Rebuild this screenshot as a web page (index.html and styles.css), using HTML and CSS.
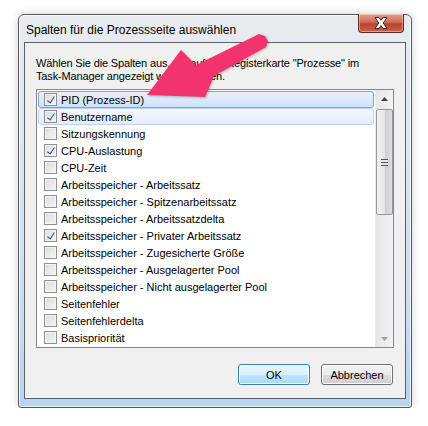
FILE: index.html
```html
<!DOCTYPE html>
<html lang="de">
<head>
    <meta charset="UTF-8">
    <title>Spalten auswählen</title>
    <link rel="stylesheet" href="styles.css">
</head>
<body>

<div class="window">
    <div class="titlebar">
        <span class="title">Spalten für die Prozessseite auswählen</span>
        <button class="close" aria-label="Schließen">
            <svg width="20" height="14" viewBox="0 0 20 14">
                <path d="M4 1.5 L8 1.5 L10 4.3 L12 1.5 L16 1.5 L12.2 7 L16 12.5 L12 12.5 L10 9.7 L8 12.5 L4 12.5 L7.8 7 Z" fill="#fff" stroke="#3b2420" stroke-width="1"/>
            </svg>
        </button>
    </div>

    <div class="client">
        <p class="intro">Wählen Sie die Spalten aus, die auf der Registerkarte "Prozesse" im<br>Task-Manager angezeigt werden sollen.</p>

        <div class="listbox">
            <ul class="items">
                <li class="item selected focused"><span class="check on"></span>PID (Prozess-ID)</li>
                <li class="item selected"><span class="check on"></span>Benutzername</li>
                <li class="item"><span class="check"></span>Sitzungskennung</li>
                <li class="item"><span class="check on"></span>CPU-Auslastung</li>
                <li class="item"><span class="check"></span>CPU-Zeit</li>
                <li class="item"><span class="check"></span>Arbeitsspeicher - Arbeitssatz</li>
                <li class="item"><span class="check"></span>Arbeitsspeicher - Spitzenarbeitssatz</li>
                <li class="item"><span class="check"></span>Arbeitsspeicher - Arbeitssatzdelta</li>
                <li class="item"><span class="check on"></span>Arbeitsspeicher - Privater Arbeitssatz</li>
                <li class="item"><span class="check"></span>Arbeitsspeicher - Zugesicherte Größe</li>
                <li class="item"><span class="check"></span>Arbeitsspeicher - Ausgelagerter Pool</li>
                <li class="item"><span class="check"></span>Arbeitsspeicher - Nicht ausgelagerter Pool</li>
                <li class="item"><span class="check"></span>Seitenfehler</li>
                <li class="item"><span class="check"></span>Seitenfehlerdelta</li>
                <li class="item"><span class="check"></span>Basispriorität</li>
            </ul>
            <div class="scrollbar">
                <div class="sb-arrow">
                    <svg width="7" height="4" viewBox="0 0 7 4"><path d="M0 4 L3.5 0 L7 4 Z" fill="#404040"/></svg>
                </div>
                <div class="sb-thumb">
                    <span class="grip"></span>
                </div>
                <div class="sb-track"></div>
                <div class="sb-arrow">
                    <svg width="7" height="4" viewBox="0 0 7 4"><path d="M0 0 L7 0 L3.5 4 Z" fill="#a0a0a0"/></svg>
                </div>
            </div>
        </div>

        <div class="buttons">
            <button class="btn default">OK</button>
            <button class="btn">Abbrechen</button>
        </div>
    </div>
</div>

<!-- pink annotation arrow over the dialog -->
<svg class="arrow" width="428" height="426" viewBox="0 0 428 426">
    <polygon points="259,34 265,36 268,41 266,47 214,76 205,97 147,95 181,50 196,65" fill="#f2336f"/>
</svg>

</body>
</html>
```

FILE: styles.css
```css
body {
    margin: 0;
    padding: 0;
    background-color: #fff;
    font-family: "Liberation Sans", Arial, sans-serif;
    font-size: 11px;
    color: #000;
}
.window {
    position: relative;
    width: 394px;
    height: 394px;
    margin: 14px 0 0 18px;
    box-sizing: border-box;
    border: 1px solid #505a66;
    border-radius: 6px 6px 3px 3px;
    background: linear-gradient(to bottom, #e8ecf0 0%, #dfe6ee 30%, #cfdeef 70%, #b8d3ef 100%);
    box-shadow: 0 0 10px rgba(0, 0, 0, 0.18), inset 0 0 0 1px rgba(255, 255, 255, 0.7);
    padding: 0 5px 8px 5px;
    display: flex;
    flex-direction: column;
}
.titlebar {
    height: 27px;
    display: flex;
    justify-content: space-between;
    align-items: flex-start;
}
.title {
    font-size: 12px;
    padding: 8px 0 0 2px;
    color: #000;
}
.close {
    width: 46px;
    height: 19px;
    margin: -1px 2px 0 0;
    padding: 0;
    border: 1px solid #5c2a22;
    border-top: none;
    border-radius: 0 0 4px 4px;
    background: linear-gradient(to bottom, #e5a08f 0%, #cf6c58 45%, #b9432f 55%, #c8614c 100%);
    box-shadow: inset 0 0 0 1px rgba(255, 220, 210, 0.5);
    display: flex;
    align-items: center;
    justify-content: center;
}
.client {
    flex: 1;
    border: 1px solid #58606a;
    background-color: #f0f0f0;
    padding: 14px 11px 0 11px;
    display: flex;
    flex-direction: column;
}
.intro {
    margin: 0;
    line-height: 13px;
    letter-spacing: -0.15px;
}
.listbox {
    margin-top: 6px;
    height: 259px;
    box-sizing: border-box;
    border: 1px solid #828790;
    background-color: #fff;
    display: flex;
}
.items {
    list-style: none;
    margin: 0;
    padding: 1px;
    flex: 1;
}
.item {
    height: 17px;
    box-sizing: border-box;
    display: flex;
    align-items: center;
    padding-left: 5px;
    border: 1px solid transparent;
    border-radius: 3px;
}
.item.selected {
    border-color: #b8d6fb;
    background: linear-gradient(to bottom, #f2f8fe, #e4effc);
}
.item.focused {
    border-color: #7da2ce;
    background: linear-gradient(to bottom, #e6f0fc, #d1e3f8);
}
.check {
    width: 13px;
    height: 13px;
    box-sizing: border-box;
    border: 1px solid #8e8f8f;
    background: linear-gradient(135deg, #dcdcdc, #f6f6f6);
    box-shadow: inset 0 0 0 1px #f4f4f4;
    margin-right: 4px;
    position: relative;
}
.check.on::after {
    content: "";
    position: absolute;
    left: 3.5px;
    top: 1px;
    width: 3px;
    height: 7px;
    border: solid #3d5394;
    border-width: 0 1.5px 1.5px 0;
    transform: rotate(35deg);
}
.scrollbar {
    width: 17px;
    background: linear-gradient(to right, #e6e6e6, #f3f3f3);
    display: flex;
    flex-direction: column;
    border-left: 1px solid #ececec;
}
.sb-arrow {
    height: 17px;
    display: flex;
    align-items: center;
    justify-content: center;
}
.sb-thumb {
    height: 106px;
    margin: 2px 0 0 0;
    box-sizing: border-box;
    border: 1px solid #979797;
    border-radius: 2px;
    background: linear-gradient(to right, #f2f2f2, #e4e4e4 50%, #cfcfcf 51%, #dcdcdc);
    display: flex;
    align-items: center;
    justify-content: center;
}
.grip {
    width: 7px;
    height: 7px;
    background: repeating-linear-gradient(to bottom, #555 0, #555 1px, #e8e8e8 1px, #e8e8e8 3px);
}
.sb-track {
    flex: 1;
}
.buttons {
    display: flex;
    justify-content: flex-end;
    gap: 11px;
    margin-top: 16px;
    padding-right: 1px;
}
.btn {
    width: 72px;
    height: 21px;
    font-family: "Liberation Sans", Arial, sans-serif;
    font-size: 11px;
    border: 1px solid #707070;
    border-radius: 3px;
    background: linear-gradient(to bottom, #f2f2f2 0%, #ebebeb 50%, #dddddd 51%, #cfcfcf 100%);
    box-shadow: inset 0 0 0 1px #fcfcfc;
    padding: 0;
    color: #000;
}
.btn.default {
    border-color: #3c7fb1;
    background: linear-gradient(to bottom, #eaf6fd 0%, #d9f0fc 50%, #bee6fd 51%, #a7d9f5 100%);
}
.arrow {
    position: absolute;
    left: 0;
    top: 0;
    pointer-events: none;
    filter: drop-shadow(1px 1px 1px rgba(0, 0, 0, 0.25));
}
```
